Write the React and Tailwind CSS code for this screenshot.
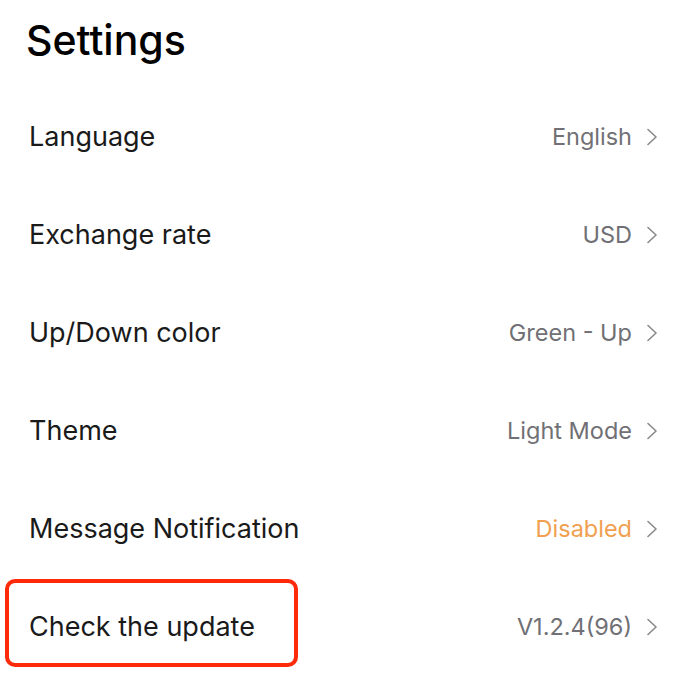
import React from 'react';

const ROWS = [
  { label: 'Language', value: 'English' },
  { label: 'Exchange rate', value: 'USD' },
  { label: 'Up/Down color', value: 'Green - Up' },
  { label: 'Theme', value: 'Light Mode' },
  { label: 'Message Notification', value: 'Disabled', warn: true },
  { label: 'Check the update', value: 'V1.2.4(96)', marked: true },
];

function Chevron() {
  return (
    <svg width="12" height="18" viewBox="0 0 12 18" fill="none" className="shrink-0">
      <path d="M2 1.5 L10 9 L2 16.5" stroke="#8a8a8a" strokeWidth="1.6" strokeLinecap="round" strokeLinejoin="round" />
    </svg>
  );
}

export default function App() {
  return (
    <div className="w-[684px] h-[682px] bg-white overflow-hidden" style={{ fontFamily: 'Inter, "Noto Sans", sans-serif' }}>
      <h1 className="pl-[26px] pt-[14px] h-[88px] text-[41px] leading-[52px] font-medium text-black">Settings</h1>
      <div>
        {ROWS.map((row) => (
          <div key={row.label} className="relative h-[98px] flex items-center justify-between pl-[29px] pr-[26px]">
            <span className="text-[27px] text-[#1a1a1a]">{row.label}</span>
            <div className="flex items-center gap-[14px]">
              <span className={`text-[23.5px] ${row.warn ? 'text-[#f0a050]' : 'text-[#707075]'}`}>{row.value}</span>
              <Chevron />
            </div>
            {row.marked && (
              <div className="absolute left-[5px] top-[1px] w-[293px] h-[88px] border-4 border-[#ff2a0a] rounded-[10px]" />
            )}
          </div>
        ))}
      </div>
    </div>
  );
}
